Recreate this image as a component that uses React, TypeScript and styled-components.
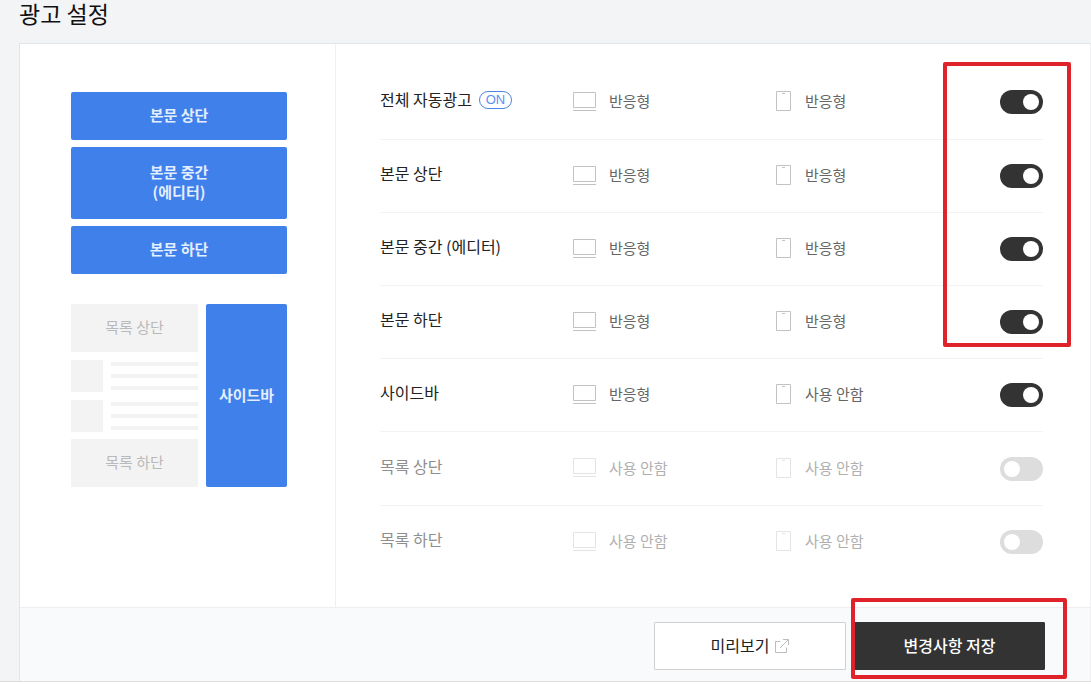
import React, { useState } from "react";
import styled, { createGlobalStyle } from "styled-components";

const GlobalStyle = createGlobalStyle`
  *, *::before, *::after { box-sizing: border-box; }
  body {
    margin: 0;
    background: #fff;
    color: #222;
    font-family: "Noto Sans CJK KR", "Noto Sans", sans-serif;
  }
`;

const Page = styled.main`
  padding-left: 19px;
  background: #f3f4f6;
  border-bottom: 1px solid #dcdcde;
`;

const Title = styled.h1`
  height: 43px;
  margin: 0;
  color: #111;
  font-size: 23px;
  font-weight: 400;
  line-height: 27px;
`;

const Card = styled.section`
  border: 1px solid #e0e5e8;
  border-right-color: #f0f0f2;
  border-bottom: 0;
  background: #fff;
`;

const CardBody = styled.div`
  display: flex;
`;

const Preview = styled.aside`
  flex: none;
  width: 316px;
  padding: 48px 48px 0 51px;
  border-right: 1px solid #f0f0f2;
`;

const Stack = styled.div<{ $gap: number }>`
  display: flex;
  flex-direction: column;
  gap: ${(p) => p.$gap}px;
`;

const Slot = styled.div<{ $active?: boolean; $tall?: boolean }>`
  display: flex;
  align-items: center;
  justify-content: center;
  height: ${(p) => (p.$tall ? 72 : 48)}px;
  padding-bottom: 2px;
  border-radius: ${(p) => (p.$active ? 2 : 0)}px;
  background: ${(p) => (p.$active ? "#3f80ea" : "#f3f3f3")};
  color: ${(p) => (p.$active ? "#e3eeff" : "#b9b9b9")};
  font-size: 15px;
  font-weight: ${(p) => (p.$active ? 700 : 400)};
  line-height: 20px;
  text-align: center;
`;

const ListPreview = styled.div`
  display: grid;
  grid-template-columns: 127px 1fr;
  gap: 8px;
  margin-top: 30px;
`;

const SidebarSlot = styled(Slot)`
  height: auto;
`;

const Posts = styled.div`
  display: flex;
  flex-direction: column;
  gap: 8px;
  padding-top: 1px;
`;

const Post = styled.div`
  display: flex;
  gap: 8px;
`;

const Thumb = styled.div`
  width: 32px;
  height: 32px;
  background: #f3f3f3;
`;

const Lines = styled.div`
  display: flex;
  flex: 1;
  flex-direction: column;
  gap: 8px;
  padding-top: 2px;
`;

const Line = styled.div`
  height: 4px;
  background: #f3f3f3;
`;

const Settings = styled.div`
  flex: 1;
  padding: 21px 47px 28px 44px;
`;

const RowGroup = styled.ul`
  position: relative;
  margin: 0;
  padding: 0;
  list-style: none;
`;

const Row = styled.li<{ $height: number; $last?: boolean }>`
  display: grid;
  grid-template-columns: 193px 203px 1fr auto;
  align-items: center;
  height: ${(p) => p.$height}px;
  border-bottom: 1px solid ${(p) => (p.$last ? "transparent" : "#f3f3f4")};
`;

const Name = styled.label<{ $off: boolean }>`
  display: flex;
  align-items: center;
  gap: 7px;
  padding-bottom: 6px;
  color: ${(p) => (p.$off ? "#8e8e8e" : "#222")};
  font-size: 16px;
  line-height: 24px;
`;

const Badge = styled.span`
  width: 33px;
  height: 18px;
  margin-top: 2px;
  border: 1px solid #4f84e2;
  border-radius: 9px;
  color: #5b8ff0;
  font-family: "Liberation Sans", sans-serif;
  font-size: 13px;
  line-height: 16px;
  text-align: center;
`;

const Device = styled.span<{ $off: boolean }>`
  display: flex;
  align-items: center;
  padding-bottom: 2px;
  color: ${(p) => (p.$off ? "#b0b0b0" : "#666")};
  font-size: 15px;
  line-height: 22px;

  svg {
    flex: none;
    margin-right: 13px;
    color: ${(p) => (p.$off ? "#e4e4e4" : "#c2c2c2")};
  }
`;

const Switch = styled.input<{ $on: boolean }>`
  appearance: none;
  display: flex;
  justify-content: ${(p) => (p.$on ? "flex-end" : "flex-start")};
  width: 43px;
  height: 24px;
  margin: 0;
  padding: 4px;
  border-radius: 12px;
  background: ${(p) => (p.$on ? "#333" : "#ddd")};
  cursor: pointer;

  &::before {
    content: "";
    width: 16px;
    height: 16px;
    border-radius: 50%;
    background: #fff;
  }
`;

const Footer = styled.footer`
  display: flex;
  justify-content: flex-end;
  gap: 8px;
  padding: 14px 45px 11px;
  border-top: 1px solid #eceef1;
  background: #f9fafc;
`;

const Button = styled.button<{ $primary?: boolean }>`
  display: flex;
  align-items: center;
  justify-content: center;
  gap: 6px;
  width: ${(p) => (p.$primary ? 191 : 192)}px;
  height: 48px;
  padding: 0 0 2px;
  border: 1px solid ${(p) => (p.$primary ? "#333" : "#cfd0d2")};
  border-radius: 1px;
  background: ${(p) => (p.$primary ? "#333" : "#fff")};
  color: ${(p) => (p.$primary ? "#fff" : "#222")};
  font: inherit;
  font-size: 16px;
  font-weight: ${(p) => (p.$primary ? 500 : 400)};
  cursor: pointer;

  svg {
    margin-top: 2px;
  }
`;

const SaveArea = styled.div`
  position: relative;
`;

const Highlight = styled.div`
  position: absolute;
  border: 4px solid #e0232b;
  border-radius: 2px;
  pointer-events: none;
`;

const SwitchHighlight = styled(Highlight)`
  top: -3px;
  right: -28px;
  bottom: 12px;
  width: 128px;
`;

const SaveHighlight = styled(Highlight)`
  top: -24px;
  right: -22px;
  bottom: -9px;
  left: -3px;
`;

const DesktopIcon = () => (
  <svg width="23" height="19" viewBox="0 0 23 19" fill="none" stroke="currentColor" aria-hidden="true">
    <path d="M.5.5h22v15H.5zM0 18.5h23" />
  </svg>
);

const PhoneIcon = () => (
  <svg width="16" height="20" viewBox="0 0 16 20" fill="none" stroke="currentColor" aria-hidden="true">
    <path d="M.5.5h14v19H.5zM6 2.5h3" />
  </svg>
);

const OpenIcon = () => (
  <svg width="14" height="14" viewBox="0 0 14 14" fill="none" stroke="#bdbdbd" aria-hidden="true">
    <path d="M5.5 2.5h-5v11h11v-5M8 .5h5.5V6M13.5.5 5 9" />
  </svg>
);

type Placement = {
  id: string;
  name: string;
  desktop: string;
  mobile: string;
  badge?: string;
  height?: number;
};

const mainPlacements: Placement[] = [
  { id: "auto", name: "전체 자동광고", desktop: "반응형", mobile: "반응형", badge: "ON", height: 75 },
  { id: "top", name: "본문 상단", desktop: "반응형", mobile: "반응형" },
  { id: "middle", name: "본문 중간 (에디터)", desktop: "반응형", mobile: "반응형" },
  { id: "bottom", name: "본문 하단", desktop: "반응형", mobile: "반응형" },
];

const otherPlacements: Placement[] = [
  { id: "sidebar", name: "사이드바", desktop: "반응형", mobile: "사용 안함" },
  { id: "list-top", name: "목록 상단", desktop: "사용 안함", mobile: "사용 안함", height: 74 },
  { id: "list-bottom", name: "목록 하단", desktop: "사용 안함", mobile: "사용 안함" },
];

const PostPreview = () => (
  <Post>
    <Thumb />
    <Lines>
      <Line />
      <Line />
      <Line />
    </Lines>
  </Post>
);

export default function App() {
  const [enabled, setEnabled] = useState<Record<string, boolean>>({
    auto: true,
    top: true,
    middle: true,
    bottom: true,
    sidebar: true,
  });

  const renderRow = (item: Placement) => {
    const on = !!enabled[item.id];
    return (
      <Row key={item.id} $height={item.height ?? 73} $last={item.id === "list-bottom"}>
        <Name htmlFor={item.id} $off={!on}>
          {item.name}
          {item.badge && <Badge>{item.badge}</Badge>}
        </Name>
        <Device $off={!on}>
          <DesktopIcon />
          {item.desktop}
        </Device>
        <Device $off={!on}>
          <PhoneIcon />
          {item.mobile}
        </Device>
        <Switch
          type="checkbox"
          id={item.id}
          $on={on}
          checked={on}
          onChange={() => setEnabled({ ...enabled, [item.id]: !on })}
        />
      </Row>
    );
  };

  return (
    <>
      <GlobalStyle />
      <Page>
        <Title>광고 설정</Title>
        <Card>
          <CardBody>
            <Preview>
              <Stack $gap={7}>
                <Slot $active>본문 상단</Slot>
                <Slot $active $tall>
                  본문 중간
                  <br />
                  (에디터)
                </Slot>
                <Slot $active>본문 하단</Slot>
              </Stack>
              <ListPreview>
                <Stack $gap={7}>
                  <Slot>목록 상단</Slot>
                  <Posts>
                    <PostPreview />
                    <PostPreview />
                  </Posts>
                  <Slot>목록 하단</Slot>
                </Stack>
                <SidebarSlot $active>사이드바</SidebarSlot>
              </ListPreview>
            </Preview>
            <Settings>
              <RowGroup>
                {mainPlacements.map(renderRow)}
                <SwitchHighlight as="li" role="presentation" />
              </RowGroup>
              <RowGroup>{otherPlacements.map(renderRow)}</RowGroup>
            </Settings>
          </CardBody>
          <Footer>
            <Button type="button">
              미리보기
              <OpenIcon />
            </Button>
            <SaveArea>
              <Button type="button" $primary>
                변경사항 저장
              </Button>
              <SaveHighlight />
            </SaveArea>
          </Footer>
        </Card>
      </Page>
    </>
  );
}
